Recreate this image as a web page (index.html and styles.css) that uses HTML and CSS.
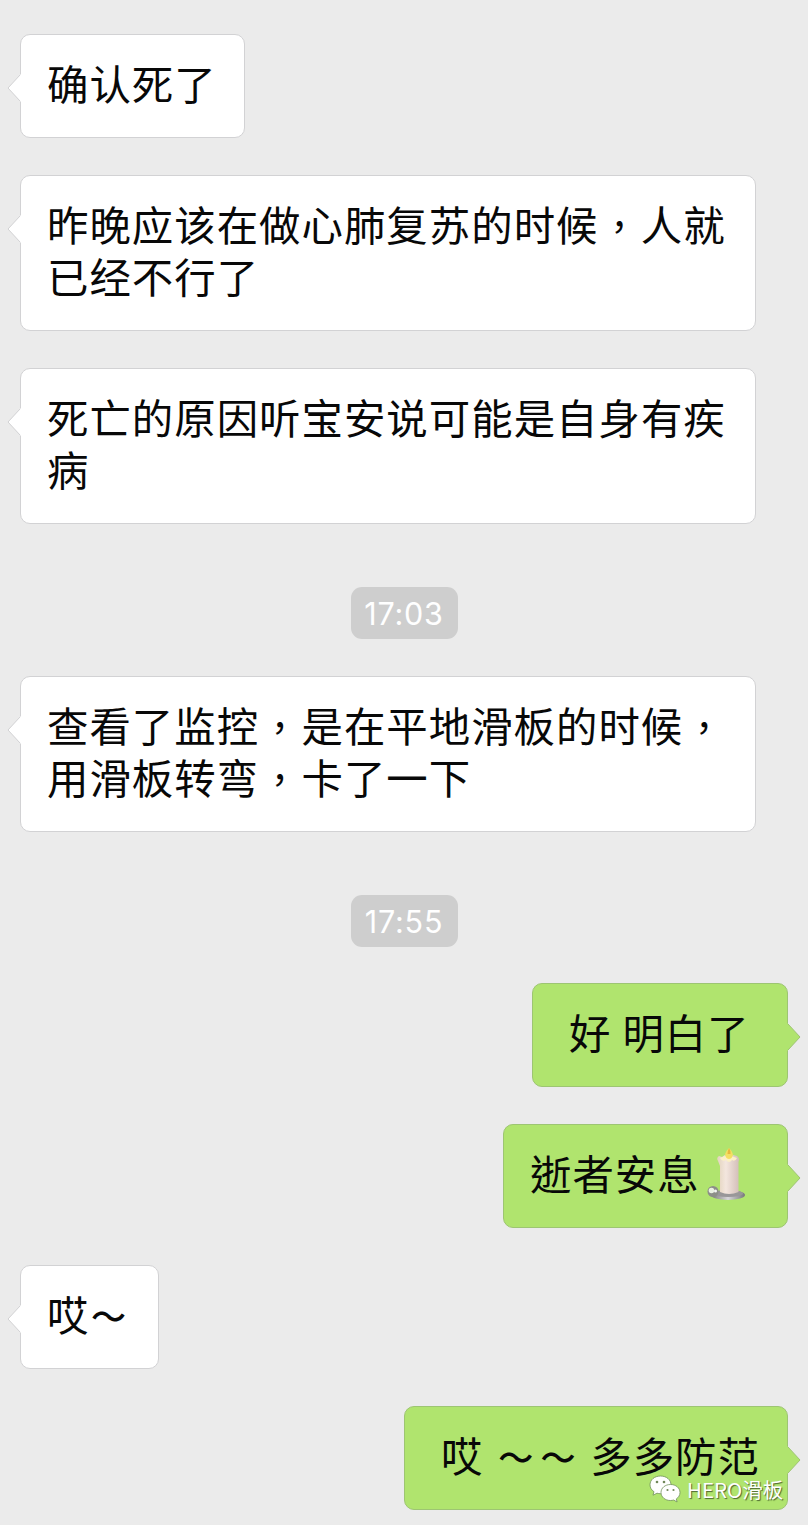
FILE: index.html
```html
<!DOCTYPE html>
<html lang="zh-CN">
<head>
<meta charset="utf-8">
<title>聊天记录</title>
<link rel="stylesheet" href="styles.css">
</head>
<body>
<main class="chat">
  <div class="bubble in">确认死了<svg class="tail" viewBox="0 0 14 28"><path class="fill" d="M14 0 1 14 14 28Z"/><path class="edge" d="M13 1 1 14 13 27"/></svg></div>
  <div class="bubble in wide">昨晚应该在做心肺复苏的时候<span class="comma" lang="zh-TW">，</span>人就<br>已经不行了<svg class="tail" viewBox="0 0 14 28"><path class="fill" d="M14 0 1 14 14 28Z"/><path class="edge" d="M13 1 1 14 13 27"/></svg></div>
  <div class="bubble in wide">死亡的原因听宝安说可能是自身有疾<br>病<svg class="tail" viewBox="0 0 14 28"><path class="fill" d="M14 0 1 14 14 28Z"/><path class="edge" d="M13 1 1 14 13 27"/></svg></div>
  <time class="stamp">17:03</time>
  <div class="bubble in wide">查看了监控<span class="comma" lang="zh-TW">，</span>是在平地滑板的时候<span class="comma" lang="zh-TW">，</span><br>用滑板转弯<span class="comma" lang="zh-TW">，</span>卡了一下<svg class="tail" viewBox="0 0 14 28"><path class="fill" d="M14 0 1 14 14 28Z"/><path class="edge" d="M13 1 1 14 13 27"/></svg></div>
  <time class="stamp">17:55</time>
  <div class="bubble out first">&nbsp;好&nbsp;明白了&nbsp;<svg class="tail" viewBox="0 0 14 28"><path class="fill" d="M0 0 13 14 0 28Z"/><path class="edge" d="M1 1 13 14 1 27"/></svg></div>
  <div class="bubble out rest"><span class="trad" lang="zh-TW">逝者安息</span><svg class="candle" viewBox="0 0 51 56">
    <defs>
      <linearGradient id="wax"><stop offset="0" stop-color="#e3d3bc"/><stop offset=".4" stop-color="#f3e6de"/><stop offset="1" stop-color="#d3beb9"/></linearGradient>
      <linearGradient id="tray"><stop offset="0" stop-color="#777"/><stop offset=".5" stop-color="#d8d6da"/><stop offset="1" stop-color="#77777b"/></linearGradient>
    </defs>
    <ellipse cx="28" cy="48" rx="17" ry="5" fill="url(#tray)"/>
    <ellipse cx="28" cy="46.500" rx="15" ry="3.500" fill="#999799"/>
    <circle cx="13" cy="44.500" r="5.500" fill="#8c8e88"/>
    <circle cx="11.500" cy="43.500" r="2.800" fill="#e9efe2"/>
    <circle cx="15.500" cy="44" r="1.500" fill="#f5f5f5"/>
    <path d="M18 14Q16 11 19 9L22 10 25 8 29 11 33 8 37 9Q40 11 38.500 15L38.500 45Q29 49 20 45L20 19Z" fill="url(#wax)"/>
    <path d="M20 11Q28 7 37 11Q35 15 32 13Q29 17 26 13Q22 15 20 11Z" fill="#fbf0c4"/>
    <path d="M29 1Q35 7 31.500 11Q29 13 26.500 11Q23 7 29 1Z" fill="#f4df62"/>
    <path d="M29 1Q31 4 30.500 7H27.500Q27.500 4 29 1Z" fill="#e8b63f"/>
  </svg><svg class="tail" viewBox="0 0 14 28"><path class="fill" d="M0 0 13 14 0 28Z"/><path class="edge" d="M1 1 13 14 1 27"/></svg></div>
  <div class="bubble in sigh"><span class="trad" lang="zh-TW">哎</span><span class="wave">～</span><svg class="tail" viewBox="0 0 14 28"><path class="fill" d="M14 0 1 14 14 28Z"/><path class="edge" d="M13 1 1 14 13 27"/></svg></div>
  <div class="bubble out last">&nbsp;<span class="trad" lang="zh-TW">哎</span>&nbsp;<span class="wave">～</span><span class="wave">～</span>&nbsp;多多防<span class="trad" lang="zh-TW">范</span><svg class="tail" viewBox="0 0 14 28"><path class="fill" d="M0 0 13 14 0 28Z"/><path class="edge" d="M1 1 13 14 1 27"/></svg></div>
  <div class="watermark">
    <svg class="logo" viewBox="0 0 32 29">
      <path class="shape" d="M11.500 1C5.500 1 1 4.800 1 9.800c0 2.900 1.500 5.300 4 6.900l-1 3.500 4-2c1.200.3 2.300.5 3.500.5 6 0 10.500-3.900 10.500-8.900S17.500 1 11.500 1Z"/>
      <path class="shape" d="M21.500 9.500c-5.300 0-9.500 3.400-9.500 8s4.200 8 9.500 8c1.100 0 2.200-.2 3.200-.5l3.400 2-.8-3.100c2.300-1.500 3.700-3.700 3.700-6.400 0-4.600-4.200-8-9.500-8Z"/>
      <circle cx="8" cy="7" r="1.300"/><circle cx="15" cy="7" r="1.300"/>
      <circle cx="18.500" cy="15" r="1.100"/><circle cx="24.500" cy="15" r="1.100"/>
    </svg>
    <span>HERO滑板</span>
  </div>
</main>
</body>
</html>
```
FILE: styles.css
```css
* { box-sizing: border-box; }

body {
  margin: 0;
  background: #ebebeb;
}

.chat {
  position: relative;
  display: flex;
  flex-direction: column;
  gap: 37px;
  height: 1525px;
  padding: 34px 20px 0;
  overflow: hidden;
  font-family: "Noto Sans CJK SC", sans-serif;
}

.bubble {
  position: relative;
  flex: none;
  height: 104px;
  padding: 21px 26px 29px;
  border: 1px solid #d2d2d4;
  border-radius: 10px;
  font-size: 41.4px;
  letter-spacing: 1.03px;
  line-height: 52px;
  color: #080808;
  white-space: nowrap;
}

.in {
  align-self: flex-start;
  width: 225px;
  background: #fff;
}

.out {
  align-self: flex-end;
  background: #b0e46e;
  border-color: #9dc572;
  word-spacing: .7px;
}

.in.wide {
  width: 736px;
  height: 156px;
}

.first {
  width: 256px;
  margin-top: -1px;
  padding-left: 25px;
}

.rest { width: 285px; }

.in.sigh { width: 139px; }

.last {
  width: 384px;
  padding-left: 25px;
}

.comma,
.trad { font-family: "Noto Sans CJK TC", sans-serif; }

.comma {
  display: inline-block;
  width: 42.4px;
  font-size: 37px;
  line-height: 40px;
  text-align: center;
}

.wave {
  display: inline-block;
  width: 42.4px;
  font-size: 35px;
  font-weight: 500;
  line-height: 40px;
  letter-spacing: 0;
  text-align: center;
  vertical-align: 1px;
}

.sigh .wave { width: 38px; }

.tail {
  position: absolute;
  top: 39px;
  width: 14px;
  height: 28px;
}

.in .tail { left: -14px; }
.out .tail { right: -14px; }

.tail .fill { fill: #fff; }
.out .fill { fill: #b0e46e; }

.tail .edge {
  fill: none;
  stroke: #d2d2d4;
  stroke-width: 1;
}

.out .edge { stroke: #9dc572; }

.stamp {
  align-self: center;
  flex: none;
  width: 107px;
  height: 52px;
  margin-top: 26px;
  border-radius: 11px;
  background: #cecece;
  color: #fff;
  font: 400 30.5px/53px Inter, sans-serif;
  letter-spacing: .8px;
  text-align: center;
}

.candle {
  width: 51px;
  height: 56px;
  margin: -18px 0 -15px;
  vertical-align: 2px;
}

.watermark {
  position: absolute;
  left: 649px;
  top: 1474px;
  display: flex;
  align-items: center;
  gap: 6px;
  color: #fff;
  font-size: 20.5px;
  line-height: 30px;
  text-shadow: 1px 1px 1px #4b6530;
  white-space: nowrap;
}

.logo {
  width: 32px;
  height: 29px;
  fill: #71885a;
}

.logo .shape {
  fill: #fff;
  stroke: #71915a;
  stroke-width: .8;
}
```
